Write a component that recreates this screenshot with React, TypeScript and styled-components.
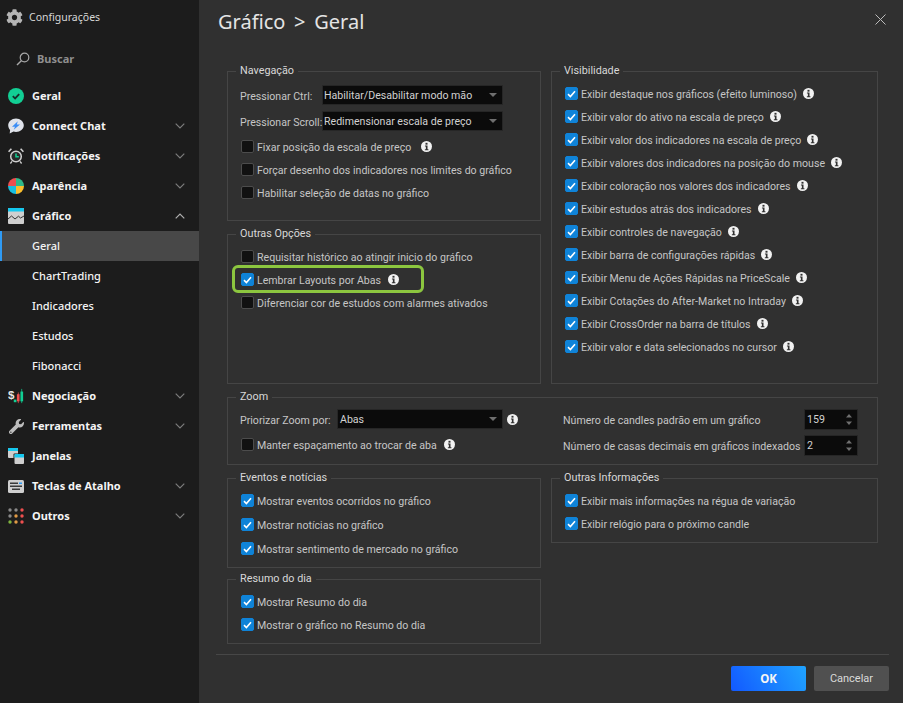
import React from "react";
import styled, { createGlobalStyle } from "styled-components";
import { FaCog, FaWrench } from "react-icons/fa";

const Global = createGlobalStyle`
  html, body { margin: 0; padding: 0; background: #303030; }
  * { box-sizing: border-box; }
  body { font-family: Roboto, "Noto Sans", sans-serif; }
`;

const Page = styled.div`
  display: flex;
  width: 903px;
  height: 703px;
  overflow: hidden;
  background: #303030;
  color: #cfcfcf;
  font-size: 10.6px;
`;

const Sidebar = styled.nav`
  width: 199px;
  flex: none;
  background: #1c1c1c;
  display: flex;
  flex-direction: column;
  font-family: "Noto Sans", sans-serif;
`;

const Brand = styled.div`
  height: 34px;
  display: flex;
  align-items: center;
  padding-left: 6px;
  gap: 6px;
  color: #d6d6d6;
  font-size: 10.5px;
`;

const BrandIcon = styled(FaCog)`
  width: 17px;
  height: 17px;
  color: #b5b5b5;
`;

const Search = styled.div`
  height: 47px;
  display: flex;
  align-items: center;
  padding: 2px 0 0 16px;
  gap: 7px;
  color: #8f8f8f;
  font-size: 11px;
  font-weight: 700;
`;

const NavRow = styled.div<{ $active?: boolean; $sub?: boolean }>`
  height: 30px;
  flex: none;
  display: flex;
  align-items: center;
  padding-left: ${(p) => (p.$active ? "30px" : p.$sub ? "32px" : "8px")};
  gap: 8px;
  color: #f4f4f4;
  font-size: 11px;
  font-weight: ${(p) => (p.$sub ? 500 : 700)};
  background: ${(p) => (p.$active ? "#484848" : "transparent")};
  border-left: ${(p) => (p.$active ? "2px solid #2f9bf5" : "none")};
`;

const NavLabel = styled.span`
  margin-bottom: 2px;
`;

const NavIcon = styled.span`
  width: 16px;
  height: 16px;
  flex: none;
  display: flex;
  align-items: center;
  justify-content: center;
`;

const Chevron = styled.svg`
  margin-left: auto;
  margin-right: 14px;
  width: 10px;
  height: 6px;
`;

const Main = styled.main`
  flex: 1;
  min-width: 0;
  display: flex;
  flex-direction: column;
`;

const Header = styled.header`
  height: 71px;
  flex: none;
  display: flex;
  align-items: flex-start;
  justify-content: space-between;
  padding: 7px 17px 0 19px;
`;

const Title = styled.h1`
  margin: 0;
  font-family: "Noto Sans", sans-serif;
  font-size: 20px;
  line-height: 30px;
  font-weight: 400;
  color: #e4e4e4;
  word-spacing: 3.5px;
`;

const Close = styled.svg`
  width: 11px;
  height: 11px;
  margin-top: 7px;
`;

const Body = styled.div`
  width: 651px;
  margin-left: 28px;
  display: flex;
  flex-direction: column;
  gap: 13px;
`;

const TopGrid = styled.div`
  display: grid;
  grid-template-columns: 314px 327px;
  column-gap: 10px;
  height: 313px;
`;

const BottomGrid = styled.div`
  display: grid;
  grid-template-columns: 314px 327px;
  column-gap: 10px;
  align-items: start;
`;

const Stack = styled.div<{ $gap: number }>`
  display: flex;
  flex-direction: column;
  gap: ${(p) => p.$gap}px;
  min-height: 0;
`;

const Group = styled.section<{ $height?: number; $gap?: number }>`
  position: relative;
  border: 1px solid #454545;
  padding: 10px 13px 7px;
  display: flex;
  flex-direction: column;
  gap: ${(p) => p.$gap ?? 0}px;
  ${(p) => (p.$height ? `height: ${p.$height}px; flex: none;` : "")}
`;

const Legend = styled.span`
  position: absolute;
  top: -8px;
  left: 8px;
  padding: 0 4px;
  background: #303030;
  color: #d8d8d8;
  font-size: 10.8px;
  line-height: 14px;
`;

const Row = styled.label`
  height: 23px;
  display: flex;
  align-items: center;
  color: #c6c6c6;
  white-space: nowrap;
`;

const RowText = styled.span`
  padding-top: 2px;
`;

const Highlight = styled.div`
  position: relative;
  &::after {
    content: "";
    box-sizing: border-box;
    position: absolute;
    left: -9px;
    top: -3px;
    width: 192px;
    height: 28px;
    border: 3px solid #8cc63f;
    border-radius: 6px;
    pointer-events: none;
  }
`;

const Box = styled.span<{ $on?: boolean }>`
  width: 13px;
  height: 13px;
  flex: none;
  margin-right: 3px;
  border-radius: 2px;
  display: flex;
  align-items: center;
  justify-content: center;
  background: ${(p) => (p.$on ? "#0f83d8" : "#111111")};
  border: 1px solid ${(p) => (p.$on ? "#0f83d8" : "#4c4c4c")};
`;

const InfoWrap = styled.svg<{ $gap: number }>`
  width: 11px;
  height: 11px;
  margin-left: ${(p) => p.$gap}px;
  flex: none;
`;

const Fields = styled.div`
  margin-bottom: 1px;
`;

const FieldRow = styled.div<{ $h?: number; $shift?: boolean }>`
  height: ${(p) => p.$h ?? 26}px;
  margin-left: ${(p) => (p.$shift ? "-1px" : "0")};
  display: flex;
  align-items: center;
  color: #c6c6c6;
  white-space: nowrap;
`;

const FieldLabel = styled.span<{ $w: number }>`
  width: ${(p) => p.$w}px;
  flex: none;
  padding-top: 2px;
`;

const SelectBox = styled.div<{ $w: number; $pad?: number }>`
  width: ${(p) => p.$w}px;
  height: 20px;
  flex: none;
  background: #0b0b0b;
  border: 1px solid #262626;
  border-radius: 1px;
  display: flex;
  align-items: center;
  justify-content: space-between;
  padding: 0 5px 0 ${(p) => p.$pad ?? 1}px;
  color: #d2d2d2;
`;

const Caret = styled.span`
  width: 0;
  height: 0;
  border-left: 4.5px solid transparent;
  border-right: 4.5px solid transparent;
  border-top: 4px solid #6f6f6f;
`;

const ZoomGrid = styled.div`
  display: grid;
  grid-template-columns: 322px 1fr;
`;

const ZoomCol = styled.div<{ $gap: number }>`
  display: flex;
  flex-direction: column;
  gap: ${(p) => p.$gap}px;
`;

const Spin = styled.div`
  width: 54px;
  height: 21px;
  flex: none;
  background: #0b0b0b;
  border: 1px solid #262626;
  display: flex;
  align-items: center;
  justify-content: space-between;
  padding: 0 5px 0 2px;
  color: #d2d2d2;
`;

const SpinArrows = styled.svg`
  width: 6px;
  height: 13px;
`;

const Footer = styled.footer`
  margin: 10px 14px 0 17px;
  border-top: 1px solid #474747;
  padding-top: 11px;
  display: flex;
  justify-content: flex-end;
  gap: 8px;
`;

const Ok = styled.button`
  width: 75px;
  height: 25px;
  border: 0;
  border-radius: 2px;
  background: linear-gradient(60deg, #1259ff, #20a4ff);
  color: #f5f5f5;
  font: 700 11.5px "Noto Sans", sans-serif;
`;

const Cancel = styled.button`
  width: 75px;
  height: 25px;
  border: 0;
  border-radius: 2px;
  background: #505050;
  color: #dadada;
  font: 400 11px Roboto, sans-serif;
`;

const Info = ({ gap = 7 }: { gap?: number }) => (
  <InfoWrap $gap={gap} viewBox="0 0 12 12">
    <circle cx="6" cy="6" r="6" fill="#f2f2f2" />
    <rect x="4.9" y="2" width="2.2" height="2" fill="#303030" />
    <path d="M4.3 5h2.8v4h1v1.1H4.2V9h1.1V6.1h-1z" fill="#303030" />
  </InfoWrap>
);

const Check = ({ on, text, info }: { on?: boolean; text: string; info?: number }) => (
  <Row>
    <Box $on={on}>
      {on && (
        <svg width="9" height="8" viewBox="0 0 9 8">
          <path d="M1 4.2l2.4 2.3L8 1.3" fill="none" stroke="#fff" strokeWidth="1.6" />
        </svg>
      )}
    </Box>
    <RowText>{text}</RowText>
    {info !== undefined && <Info gap={info} />}
  </Row>
);

const Down = () => (
  <Chevron viewBox="0 0 10 6">
    <path d="M.7.7L5 5l4.3-4.3" fill="none" stroke="#7c7c7c" strokeWidth="1.2" />
  </Chevron>
);
const Up = () => (
  <Chevron viewBox="0 0 10 6">
    <path d="M.7 5.3L5 1l4.3 4.3" fill="none" stroke="#b0b0b0" strokeWidth="1.2" />
  </Chevron>
);

const Arrows = () => (
  <SpinArrows viewBox="0 0 6 13">
    <path d="M3 1l3 3.500H0zM3 12L0 8.500h6z" fill="#6f6f6f" />
  </SpinArrows>
);

const icons: Record<string, React.ReactNode> = {
  geral: (
    <svg width="16" height="16" viewBox="0 0 16 16">
      <circle cx="8" cy="8" r="8" fill="#12cf94" />
      <path d="M4.8 8.2l2.3 2.2 4.1-4.3" fill="none" stroke="#15302a" strokeWidth="1.8" />
    </svg>
  ),
  chat: (
    <svg width="16" height="16" viewBox="0 0 16 16">
      <path d="M8 .5c4.3 0 7.800 3 7.800 6.800S12.300 14 8 14c-.9 0-1.700-.1-2.500-.4L1.700 15.600l.4-3.600C.9 10.800.2 9.100.2 7.300.2 3.500 3.700.5 8 .5z" fill="#dfe3ea" />
      <path d="M9.800 3.300L4 8.800h3L5.700 11.800 12 6.400H8.800z" fill="#3a8df5" />
    </svg>
  ),
  alarm: (
    <svg width="16" height="16" viewBox="0 0 16 16">
      <circle cx="8" cy="8.500" r="5.300" fill="#2a2a2a" stroke="#cfcfcf" strokeWidth="1.500" />
      <path d="M8 5.500v3.300h2.800" fill="none" stroke="#12cf94" strokeWidth="1.500" />
      <path d="M.6 3.800L3.400.8M15.400 3.800L12.600.8" stroke="#cfcfcf" strokeWidth="1.600" />
      <path d="M4 13.300l-1.600 2.200M12 13.300l1.600 2.200" stroke="#cfcfcf" strokeWidth="1.300" />
    </svg>
  ),
  pie: (
    <svg width="16" height="16" viewBox="0 0 16 16">
      <path d="M8 8V0a8 8 0 0 0-8 8z" fill="#ee4f4f" />
      <path d="M8 8V0a8 8 0 0 1 8 8z" fill="#2fb98a" />
      <path d="M8 8v8a8 8 0 0 1-8-8z" fill="#19bfe0" />
      <path d="M8 8v8a8 8 0 0 0 8-8z" fill="#fbbf2d" />
    </svg>
  ),
  chart: (
    <svg width="16" height="16" viewBox="0 0 16 16">
      <rect width="16" height="16" rx="1" fill="#cfcfcf" />
      <path d="M0 1a1 1 0 0 1 1-1h14a1 1 0 0 1 1 1v2.500H0z" fill="#14c8ef" />
      <path d="M0 11l3.500-3 3.500 3 3.500-2.800 2 1.800L16 8" fill="none" stroke="#333" strokeWidth="1" />
    </svg>
  ),
  money: (
    <svg width="18" height="16" viewBox="0 0 18 16">
      <text x="0" y="11" fontFamily="Liberation Sans" fontWeight="700" fontSize="13" fill="#e6e6e6">$</text>
      <rect x="6.500" y="12" width="3" height="3" fill="#12cf94" />
      <rect x="10" y="6" width="3" height="8" fill="#ee4f4f" />
      <rect x="11.100" y="4" width="0.800" height="12" fill="#ee4f4f" />
      <rect x="14" y="3" width="3" height="11" fill="#12cf94" />
      <rect x="15.100" y="0" width="0.800" height="16" fill="#12cf94" />
    </svg>
  ),
  wrench: <FaWrench size={15} color="#bdbdbd" />,
  windows: (
    <svg width="16" height="16" viewBox="0 0 16 16">
      <rect width="10" height="10" rx="1" fill="#cfcfcf" />
      <path d="M0 1a1 1 0 0 1 1-1h8a1 1 0 0 1 1 1v2H0z" fill="#14c8ef" />
      <rect x="5.500" y="5.500" width="10.500" height="10.500" rx="1" fill="#1c1c1c" />
      <rect x="6.500" y="6" width="9.500" height="10" rx="1" fill="#cfcfcf" />
      <path d="M6.500 7a1 1 0 0 1 1-1h7.500a1 1 0 0 1 1 1v2.500H6.500z" fill="#14c8ef" />
    </svg>
  ),
  keys: (
    <svg width="16" height="13" viewBox="0 0 16 13">
      <rect width="16" height="13" rx="1.500" fill="#cfcfcf" />
      <g fill="#3a3a3a">
        <rect x="2" y="2.500" width="8" height="1.500" />
        <rect x="11" y="2.500" width="3" height="1.500" fill="#2f9bf5" />
        <rect x="2" y="5.500" width="12" height="1.500" />
        <rect x="4" y="8.500" width="8" height="1.500" />
      </g>
    </svg>
  ),
  dots: (
    <svg width="16" height="16" viewBox="0 0 16 16">
      {[
        ["#8a8a8a", "#8a8a8a", "#ee4f4f"],
        ["#8a8a8a", "#e09a45", "#ee4f4f"],
        ["#7fb33f", "#e09a45", "#ee4f4f"],
      ].map((row, y) =>
        row.map((c, x) => <circle key={`${x}${y}`} cx={2 + x * 6} cy={2 + y * 6} r="1.700" fill={c} />)
      )}
    </svg>
  ),
};

const nav: { label: string; icon?: string; chev?: "down" | "up"; active?: boolean }[] = [
  { label: "Geral", icon: "geral" },
  { label: "Connect Chat", icon: "chat", chev: "down" },
  { label: "Notificações", icon: "alarm", chev: "down" },
  { label: "Aparência", icon: "pie", chev: "down" },
  { label: "Gráfico", icon: "chart", chev: "up" },
  { label: "Geral", active: true },
  { label: "ChartTrading" },
  { label: "Indicadores" },
  { label: "Estudos" },
  { label: "Fibonacci" },
  { label: "Negociação", icon: "money", chev: "down" },
  { label: "Ferramentas", icon: "wrench", chev: "down" },
  { label: "Janelas", icon: "windows" },
  { label: "Teclas de Atalho", icon: "keys", chev: "down" },
  { label: "Outros", icon: "dots", chev: "down" },
];

const visible: string[] = [
  "Exibir destaque nos gráficos (efeito luminoso)",
  "Exibir valor do ativo na escala de preço",
  "Exibir valor dos indicadores na escala de preço",
  "Exibir valores dos indicadores na posição do mouse",
  "Exibir coloração nos valores dos indicadores",
  "Exibir estudos atrás dos indicadores",
  "Exibir controles de navegação",
  "Exibir barra de configurações rápidas",
  "Exibir Menu de Ações Rápidas na PriceScale",
  "Exibir Cotações do After-Market no Intraday",
  "Exibir CrossOrder na barra de títulos",
  "Exibir valor e data selecionados no cursor",
];

export default function App() {
  return (
    <Page>
      <Global />
      <Sidebar>
        <Brand>
          <BrandIcon />
          Configurações
        </Brand>
        <Search>
          <svg width="14" height="14" viewBox="0 0 14 14">
            <circle cx="8.500" cy="5.500" r="4.300" fill="none" stroke="#a8a8a8" strokeWidth="1.200" />
            <path d="M5.300 8.700L1 13" stroke="#a8a8a8" strokeWidth="1.400" />
          </svg>
          Buscar
        </Search>
        {nav.map((n, i) => (
          <NavRow key={i} $active={n.active} $sub={!n.icon}>
            {n.icon && <NavIcon>{icons[n.icon]}</NavIcon>}
            <NavLabel>{n.label}</NavLabel>
            {n.chev === "down" && <Down />}
            {n.chev === "up" && <Up />}
          </NavRow>
        ))}
      </Sidebar>
      <Main>
        <Header>
          <Title>Gráfico &gt; Geral</Title>
          <Close viewBox="0 0 11 11">
            <path d="M.5.500l10 10M10.500.500l-10 10" stroke="#bcbcbc" strokeWidth="1" />
          </Close>
        </Header>
        <Body>
          <TopGrid>
            <Stack $gap={13}>
              <Group $height={150}>
                <Legend>Navegação</Legend>
                <Fields>
                  <FieldRow $shift>
                    <FieldLabel $w={82}>Pressionar Ctrl:</FieldLabel>
                    <SelectBox $w={181}>
                      Habilitar/Desabilitar modo mão
                      <Caret />
                    </SelectBox>
                  </FieldRow>
                  <FieldRow $shift>
                    <FieldLabel $w={82}>Pressionar Scroll:</FieldLabel>
                    <SelectBox $w={181}>
                      Redimensionar escala de preço
                      <Caret />
                    </SelectBox>
                  </FieldRow>
                </Fields>
                <Check text="Fixar posição da escala de preço" info={10} />
                <Check text="Forçar desenho dos indicadores nos limites do gráfico" />
                <Check text="Habilitar seleção de datas no gráfico" />
              </Group>
              <Group $height={150}>
                <Legend>Outras Opções</Legend>
                <Check text="Requisitar histórico ao atingir inicio do gráfico" />
                <Highlight>
                  <Check on text="Lembrar Layouts por Abas" info={7} />
                </Highlight>
                <Check text="Diferenciar cor de estudos com alarmes ativados" />
              </Group>
            </Stack>
            <Group>
              <Legend>Visibilidade</Legend>
              {visible.map((t) => (
                <Check key={t} on text={t} info={6} />
              ))}
            </Group>
          </TopGrid>
          <Group $height={68}>
            <Legend>Zoom</Legend>
            <ZoomGrid>
              <ZoomCol $gap={3}>
                <FieldRow $h={22} $shift>
                  <FieldLabel $w={97}>Priorizar Zoom por:</FieldLabel>
                  <SelectBox $w={166} $pad={2}>
                    Abas
                    <Caret />
                  </SelectBox>
                  <Info gap={4} />
                </FieldRow>
                <Check text="Manter espaçamento ao trocar de aba" info={7} />
              </ZoomCol>
              <ZoomCol $gap={4}>
                <FieldRow $h={22}>
                  <FieldLabel $w={241}>Número de candles padrão em um gráfico</FieldLabel>
                  <Spin>
                    159
                    <Arrows />
                  </Spin>
                </FieldRow>
                <FieldRow $h={22}>
                  <FieldLabel $w={241}>Número de casas decimais em gráficos indexados</FieldLabel>
                  <Spin>
                    2
                    <Arrows />
                  </Spin>
                </FieldRow>
              </ZoomCol>
            </ZoomGrid>
          </Group>
          <BottomGrid>
            <Stack $gap={11}>
              <Group $gap={1}>
                <Legend>Eventos e notícias</Legend>
                <Check on text="Mostrar eventos ocorridos no gráfico" />
                <Check on text="Mostrar notícias no gráfico" />
                <Check on text="Mostrar sentimento de mercado no gráfico" />
              </Group>
              <Group>
                <Legend>Resumo do dia</Legend>
                <Check on text="Mostrar Resumo do dia" />
                <Check on text="Mostrar o gráfico no Resumo do dia" />
              </Group>
            </Stack>
            <Group>
              <Legend>Outras Informações</Legend>
              <Check on text="Exibir mais informações na régua de variação" />
              <Check on text="Exibir relógio para o próximo candle" />
            </Group>
          </BottomGrid>
        </Body>
        <Footer>
          <Ok>OK</Ok>
          <Cancel>Cancelar</Cancel>
        </Footer>
      </Main>
    </Page>
  );
}
